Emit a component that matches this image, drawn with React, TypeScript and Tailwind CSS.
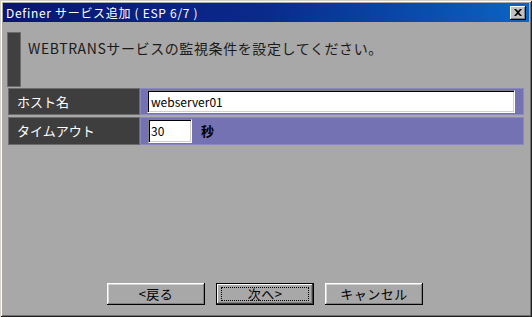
import React from "react";

const jp = { fontFamily: '"Noto Sans CJK JP", "Noto Sans", sans-serif' };

function Btn({ label, def }: { label: string; def?: boolean }) {
  return (
    <div
      className={
        "w-[98px] h-[22px] flex items-center justify-center bg-[#a8a8a8] text-[13px] leading-none text-black relative " +
        (def
          ? "border border-black shadow-[inset_-1px_-1px_0_#404040,inset_1px_1px_0_#ffffff,inset_-2px_-2px_0_#808080]"
          : "shadow-[inset_-1px_-1px_0_#000000,inset_1px_1px_0_#ffffff,inset_-2px_-2px_0_#808080,inset_2px_2px_0_#d4d4d4]")
      }
      style={jp}
    >
      {def && <div className="absolute left-[4px] right-[4px] top-[3px] bottom-[3px] border border-dotted border-black" />}
      <span className="relative -mt-[1px] tracking-[0.5px]">{label}</span>
    </div>
  );
}

export default function App() {
  return (
    <div
      className="w-[532px] h-[317px] flex flex-col p-[3px] bg-[#a8a8a8] shadow-[inset_1px_1px_0_#d4d0c8,inset_-1px_-1px_0_#202020,inset_2px_2px_0_#ffffff,inset_-2px_-2px_0_#707070]"
      style={jp}
    >
      <div className="h-[19px] flex items-center pl-[3px] pr-[3px] bg-gradient-to-r from-[#0a1670] via-[#0a2a8c] to-[#0c64c4]">
        <span className="text-white text-[12px] leading-none tracking-[0.7px]" style={jp}>
          Definer サービス追加 ( ESP 6/7 )
        </span>
        <div className="ml-auto w-[16px] h-[14px] bg-[#c0c0c0] flex items-center justify-center shadow-[inset_-1px_-1px_0_#000000,inset_1px_1px_0_#ffffff,inset_-2px_-2px_0_#808080]">
          <svg width="8" height="7" viewBox="0 0 8 7">
            <path d="M0 0h2l2 2 2-2h2L5 3.5 8 7H6L4 5 2 7H0l3-3.5z" fill="#000" />
          </svg>
        </div>
      </div>

      <div className="flex-1 flex flex-col pl-[4px] pr-[5px] pt-[10px]">
        <div className="flex h-[55px]">
          <div className="w-[14px] h-[55px] bg-[#404040] border border-[#6c6c6c]" />
          <div className="pl-[7px] pt-[6px] text-[14px] leading-[20px] text-[#1a1a1a] tracking-[0.6px]" style={jp}>
            WEBTRANSサービスの監視条件を設定してください。
          </div>
        </div>

        <div className="flex flex-col gap-[2px] mt-[1px] pl-[1px]">
          <div className="flex h-[27px]">
            <div className="w-[132px] bg-[#3e3e3e] border border-[#6c6c6c] flex items-center pl-[8px] text-white text-[13px]" style={jp}>
              ホスト名
            </div>
            <div className="flex-1 bg-[#7572b4] border border-[#8a88c0] flex items-center pl-[6px] pr-[8px]">
              <div className="flex-1 h-[23px] bg-white border-t border-l border-[#808080] border-b border-r border-b-white border-r-white shadow-[inset_1px_1px_0_#000000,inset_-1px_-1px_0_#d4d0c8] flex items-center pl-[3px] text-[12px] text-black" style={jp}>
                webserver01
              </div>
            </div>
          </div>
          <div className="flex h-[28px]">
            <div className="w-[132px] bg-[#3e3e3e] border border-[#6c6c6c] flex items-center pl-[8px] text-white text-[13px]" style={jp}>
              タイムアウト
            </div>
            <div className="flex-1 bg-[#7572b4] border border-[#8a88c0] flex items-center pl-[7px]">
              <div className="w-[44px] h-[24px] bg-white border-t border-l border-[#808080] border-b border-r border-b-white border-r-white shadow-[inset_1px_1px_0_#000000,inset_-1px_-1px_0_#d4d0c8] flex items-center pl-[2px] text-[12px] text-black" style={jp}>
                30
              </div>
              <span className="ml-[9px] text-[13px] text-black font-bold" style={jp}>
                秒
              </span>
            </div>
          </div>
        </div>

        <div className="mt-auto mb-[9px] flex justify-center gap-[11px] pr-[1px]">
          <Btn label="<戻る" />
          <Btn label="次へ>" def />
          <Btn label="キャンセル" />
        </div>
      </div>
    </div>
  );
}
